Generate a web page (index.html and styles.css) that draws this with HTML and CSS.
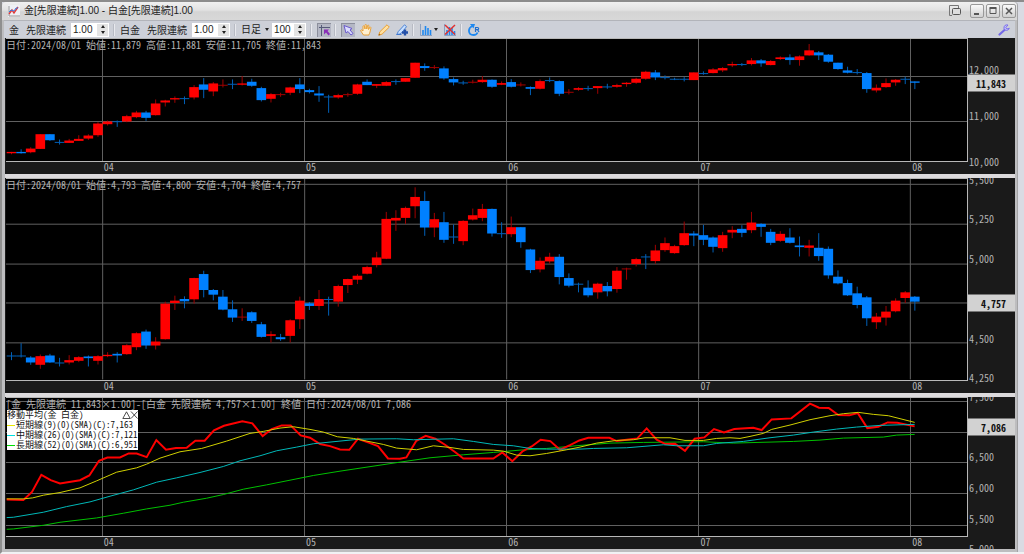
FILE: index.html
```html
<!DOCTYPE html>
<html lang="ja">
<head>
    <meta charset="UTF-8">
    <meta name="viewport" content="width=device-width, initial-scale=1.0">
    <title>金[先限連続]1.00 - 白金[先限連続]1.00</title>
    <link rel="stylesheet" href="styles.css">
</head>
<body>
    <div class="window">
        <header class="titlebar">
            <svg class="app-icon" viewBox="0 0 12 12">
                <rect width="12" height="12" fill="#eef0f4"/>
                <path d="M1 1v10h11" fill="none" stroke="#999"/>
                <path d="M1 9l3-4 2 3 4-6" fill="none" stroke="#e03a3a" stroke-width="1.4"/>
                <path d="M1 7l2-2 3 1 2-3 2 0" fill="none" stroke="#3a7be0"/>
            </svg>
            <h1>金[先限連続]1.00 - 白金[先限連続]1.00</h1>
            <div class="win-buttons">
                <button class="detach" aria-label="別ウィンドウ">
                    <svg viewBox="0 0 12 12"><path d="M3 10.500H.5V.5h9V3" fill="none" stroke="#777"/><rect x="3.500" y="3.500" width="8" height="6" rx="1" fill="#ddd" stroke="#555"/></svg>
                </button>
                <button aria-label="最小化"><svg viewBox="0 0 12 12"><path d="M3 9h5" stroke="#555" stroke-width="2"/></svg></button>
                <button aria-label="最大化"><svg viewBox="0 0 12 12"><path d="M3 3.500h6v5H3z" fill="none" stroke="#555"/><path d="M2.500 3h7" stroke="#555" stroke-width="2"/></svg></button>
                <button aria-label="閉じる"><svg viewBox="0 0 12 12"><path d="M3 3l6 6M9 3l-6 6" stroke="#555" stroke-width="1.500"/></svg></button>
            </div>
        </header>

        <div class="toolbar">
            <label for="ratio1"><span>金</span><span>先限連続</span></label>
            <div class="spin">
                <input type="text" id="ratio1" value="1.00">
                <div class="arrows"><button aria-label="増やす"></button><button class="down" aria-label="減らす"></button></div>
            </div>
            <span class="sep"></span>
            <label for="ratio2"><span>白金</span><span>先限連続</span></label>
            <div class="spin">
                <input type="text" id="ratio2" value="1.00">
                <div class="arrows"><button aria-label="増やす"></button><button class="down" aria-label="減らす"></button></div>
            </div>
            <span class="sep"></span>
            <div class="period">
                <select aria-label="足種"><option>日足</option></select>
            </div>
            <div class="spin count">
                <input type="text" aria-label="本数" value="100">
                <div class="arrows"><button aria-label="増やす"></button><button class="down" aria-label="減らす"></button></div>
            </div>
            <span class="sep"></span>
            <button class="tool on" aria-label="クロスカーソル">
                <svg viewBox="0 0 12 12"><path d="M3.500 1v11M1 3.500h11" stroke="#555b78"/><path d="M6 5.500h5L9.500 7l2.500 3-1.500 1.500L8 8.500 6 10.500z" fill="#8a2fb8"/></svg>
            </button>
            <span class="sep"></span>
            <button class="tool on" aria-label="選択">
                <svg viewBox="0 0 12 12"><path d="M2 1.500l8 3-2 1.500 3 3.500-2 1.500-3-3.500L4 9z" fill="#dcdcff" stroke="#6a5acd"/></svg>
            </button>
            <button class="tool" aria-label="移動">
                <svg viewBox="0 0 12 12"><path d="M3.500 11L.8 7c-.5-1 .6-1.500 1.300-.7L3 7V2.500c0-1 1.300-1 1.500 0L5 5V1.300C5 .2 6.500.2 6.600 1.300L6.800 5l.7-3.200c.2-1 1.500-.8 1.400.2L8.600 5.500l1-2c.5-.8 1.600-.3 1.300.6L10 8c-.3 1.500-1 2-1 3z" fill="#fff0d0" stroke="#e89a28" stroke-width=".9"/></svg>
            </button>
            <button class="tool" aria-label="描画">
                <svg viewBox="0 0 12 12"><path d="M.8 11.200l1-3.400L9 .8l2.300 2.300-7.200 7z" fill="#ffe0a0" stroke="#e89a28" stroke-width=".9"/><path d="M.5 11.500l.6-2 1.400 1.400z" fill="#a06010"/></svg>
            </button>
            <button class="tool" aria-label="描画オプション">
                <svg viewBox="0 0 12 12"><path d="M.8 10.500l1.500-3L8.500.8l2 1.800L6 8.500 3.500 10z" fill="#c8e0ff" stroke="#3f78d0" stroke-width=".9"/><path d="M.5 10.500h5" stroke="#3f78d0"/><path d="M9 5.500v6M6 8.500h6" stroke="#2450a8" stroke-width="2.400"/></svg>
            </button>
            <span class="sep"></span>
            <button class="tool wide" aria-label="指標">
                <svg viewBox="0 0 12 12"><path d="M.5 0v11.500H12" fill="none" stroke="#8aa0c0"/><path d="M3 11V6M5.500 11V2M8 11V4M10.500 11V6" stroke="#1e88f0" stroke-width="1.600"/></svg>
            </button>
            <button class="tool" aria-label="指標削除">
                <svg viewBox="0 0 12 12"><path d="M.5 0v11.500H12" fill="none" stroke="#8aa0c0"/><path d="M3 11V6M5.500 11V3M8 11V4M10.500 11V7" stroke="#1e88f0" stroke-width="1.600"/><path d="M1 1l10 9.500M11 1L1 10.500" stroke="#e03030" stroke-width="1.500"/></svg>
            </button>
            <span class="sep"></span>
            <button class="tool" aria-label="更新">
                <svg viewBox="0 0 12 12"><path d="M4.500 2C-.5 4-.2 11 5.500 11c2 0 3.500-1 4-2.500" fill="none" stroke="#1e88f0" stroke-width="1.800"/><path d="M2 0h5L5.500 4.500z" fill="#1e88f0"/><path d="M7.500 8V3.500h2c1.500 0 1.500 2.200 0 2.200h-2m2 0L11 8" fill="none" stroke="#1e6fd0" stroke-width="1.200"/></svg>
            </button>
            <button class="tool settings" aria-label="設定">
                <svg viewBox="0 0 12 12"><path d="M1.500 10.500l5-4.500" stroke="#7468e8" stroke-width="2.200" stroke-linecap="round"/><path d="M10 1C7.500.3 5.500 2 6 4.500 7 7 10.500 7 11.300 4.200L9 5 7.800 3.500z" fill="#c4c0ff" stroke="#7468e8" stroke-width=".9"/></svg>
            </button>
        </div>

        <main class="panels">
            <section class="panel" id="gold">
                <div class="plot">
                    <svg class="chart" preserveAspectRatio="none"></svg>
                    <p class="info">日付:2024/08/01 始値:11,879 高値:11,881 安値:11,705 終値:11,843</p>
                </div>
                <div class="months"></div>
                <div class="scale"></div>
            </section>
            <section class="panel" id="platinum">
                <div class="plot">
                    <svg class="chart" preserveAspectRatio="none"></svg>
                    <p class="info">日付:2024/08/01 始値:4,793 高値:4,800 安値:4,704 終値:4,757</p>
                </div>
                <div class="months"></div>
                <div class="scale"></div>
            </section>
            <section class="panel" id="spread">
                <div class="plot">
                    <svg class="chart" preserveAspectRatio="none"></svg>
                    <p class="info">[金 先限連続 11,843×1.00]－[白金 先限連続 4,757×1.00] 終値 日付:2024/08/01 7,086</p>
                    <div class="legend">
                        <div class="legend-head">移動平均(金 白金)
                            <svg viewBox="0 0 16 8"><path d="M.8 7.500L4.500.8l3.700 6.700zM9 .5l6.500 7M15.500.5L9 7.500" fill="none" stroke="#222" stroke-width=".8"/></svg>
                        </div>
                        <div class="short">短期線(9)(0)(SMA)(C):7,163</div>
                        <div class="mid">中期線(26)(0)(SMA)(C):7,121</div>
                        <div class="long">長期線(52)(0)(SMA)(C):6,951</div>
                    </div>
                </div>
                <div class="months"></div>
                <div class="scale"></div>
            </section>
        </main>
    </div>
    <script src="charts.js"></script>
</body>
</html>
```
FILE: styles.css
```css
* {
    margin: 0;
    padding: 0;
    box-sizing: border-box;
}

body {
    font-family: "Liberation Sans", "Noto Sans CJK JP", sans-serif;
    font-size: 10px;
    color: #222;
    height: 100vh;
    overflow: hidden;
    background: #d9dbe3;
    border-top: 2px solid #8c8c8c;
    border-left: 2px solid #8f8f8f;
    border-bottom: 2px solid #f2f2f4;
    padding-right: 6px;
}

button,
input,
select {
    font: inherit;
    color: inherit;
    border: none;
    background: none;
}

.window {
    display: flex;
    flex-direction: column;
    height: 100%;
    background: #bdbdbf;
    border-right: 1px solid #a4a4a6;
    border-radius: 4px 4px 0 0;
}

.titlebar {
    display: flex;
    align-items: center;
    height: 18px;
    padding: 0 1px 0 6px;
    gap: 4px;
    background: linear-gradient(#f0f0f0, #e2e2e2 45%, #d4d4d4 55%, #d8d8d8);
    border-radius: 4px 4px 0 0;
}

.app-icon {
    width: 12px;
    height: 12px;
}

h1 {
    flex: 1;
    font-size: 10px;
    font-weight: normal;
    line-height: 16px;
    white-space: nowrap;
}

.win-buttons {
    display: flex;
    gap: 2px;
}

.win-buttons button {
    width: 14px;
    height: 14px;
    border: 1px solid #999;
    border-radius: 2px;
    background: linear-gradient(#fafafa, #d0d0d0);
}

.win-buttons svg {
    display: block;
    width: 12px;
    height: 12px;
}

.win-buttons .detach {
    margin-right: 5px;
    border: none;
    background: none;
}

.toolbar {
    display: flex;
    align-items: center;
    height: 18px;
    margin: 0 2px;
    padding: 0 4px 0 5px;
    background: #cdd0d8;
    border-top: 1px solid #b2b4ba;
}

.toolbar label {
    display: flex;
    gap: 7px;
    margin-right: 5px;
    white-space: nowrap;
}

.spin {
    display: flex;
    width: 38px;
    height: 14px;
    padding: 1px;
    background: #fff;
}

.spin input {
    flex: 1;
    width: 0;
    padding-left: 1px;
    line-height: 12px;
}

.count {
    width: 34px;
}

.arrows {
    display: flex;
    flex-direction: column;
    justify-content: space-between;
    width: 11px;
}

.arrows button {
    display: flex;
    align-items: center;
    justify-content: center;
    height: 6px;
    background: #e4e4e4;
}

.arrows button::before,
.period::after,
.wide::after {
    content: "";
    border: 2px solid transparent;
    border-top: none;
    border-bottom: 3px solid #222;
}

.arrows .down::before,
.period::after,
.wide::after {
    border-bottom: none;
    border-top: 3px solid #222;
}

.sep {
    width: 1px;
    height: 12px;
    margin: 0 5px;
    background: #e8e9ee;
    box-shadow: -1px 0 #b8bbc4;
}

.period {
    display: flex;
    align-items: center;
    gap: 2px;
    margin-right: 3px;
}

.period select {
    appearance: none;
    width: 22px;
}

.tool {
    display: flex;
    align-items: center;
    justify-content: center;
    width: 14px;
    height: 14px;
    margin-right: 4px;
}

.tool svg {
    width: 12px;
    height: 12px;
    flex: none;
}

.tool.on {
    background: #b4b7c4;
    box-shadow: inset 1px 1px #8c8f9c;
}

.tool + .sep {
    margin-left: 0;
}

.wide {
    width: 20px;
    gap: 2px;
}

.settings {
    margin: 0 0 0 auto;
}

.panels {
    flex: 1;
    display: grid;
    grid-template-rows: 136fr 214fr 152fr;
    gap: 4px;
    margin: 0 2px 3px 3px;
    background: #dcdadc;
    min-height: 0;
}

.panel {
    display: grid;
    grid-template: "plot scale" minmax(0, 1fr) "months scale" 12px / minmax(0, 1fr) 47px;
    background: #1a1a1a;
    overflow: hidden;
    font-family: "Noto Sans Mono CJK JP", "Noto Sans CJK JP", monospace;
    font-feature-settings: "hwid";
    color: #b4b4b4;
}

.plot {
    grid-area: plot;
    position: relative;
    margin-left: 1px;
    background: #000;
    border: solid #b8b8b8;
    border-width: 1px 1px 1px 0;
}

.chart {
    position: absolute;
    width: 100%;
    height: 100%;
}

.grid {
    stroke: #606060;
    stroke-width: 1;
    vector-effect: non-scaling-stroke;
    shape-rendering: crispEdges;
}

.up {
    fill: #f00;
}

.up-wick {
    fill: #a00000;
}

.fall {
    fill: #0080ff;
}

.fall-wick {
    fill: #0060b8;
}

.line {
    fill: none;
    stroke-width: 1;
    vector-effect: non-scaling-stroke;
}

.price {
    stroke: #f00;
    stroke-width: 2;
}

.sma9 {
    stroke: #d0d000;
}

.sma26 {
    stroke: #00b8b8;
}

.sma52 {
    stroke: #00c000;
}

.info {
    position: absolute;
    top: 0;
    left: 0;
    line-height: 12px;
    white-space: nowrap;
}

.legend {
    position: absolute;
    top: 12px;
    left: 1px;
    width: 131px;
    padding-left: 9px;
    background: #fff;
    color: #111;
    font-size: 9px;
    line-height: 10px;
    white-space: nowrap;
}

.legend-head {
    display: flex;
    align-items: center;
    justify-content: space-between;
    margin-left: -9px;
}

.legend svg {
    width: 16px;
    height: 8px;
}

.short::before,
.mid::before,
.long::before {
    content: "";
    float: left;
    width: 8px;
    height: 1px;
    margin: 5px 0 0 -9px;
    background: #e8e800;
}

.mid::before {
    background: #00e0e0;
}

.long::before {
    background: #00e000;
}

.months {
    grid-area: months;
    position: relative;
    margin-left: 1px;
}

.months span {
    position: absolute;
    padding-left: 1px;
    line-height: 10px;
}

.scale {
    grid-area: scale;
    position: relative;
}

.scale span {
    position: absolute;
    left: 1px;
    line-height: 12px;
    transform: translateY(-50%);
}

.scale .last {
    left: 0;
    right: 0;
    padding-right: 9px;
    background: #d2d2d2;
    color: #111;
    font-weight: bold;
    line-height: 17px;
    text-align: right;
}
```
FILE: charts.js
```javascript
// each bar: direction (r = up, b = down), body top, body bottom, wick top, wick bottom
const goldBars = `r 341 345 341 348|b 341 345 333 346|r 331 342 327 345|r 288 332 288 332|b 288 306 288 308
b 311 314 304 319|r 307 314 302 314|r 302 308 291 308|r 292 301 288 305|r 256 291 252 296
r 250 258 247 262|b 249 251 247 266|r 234 250 230 252|r 223 237 218 240|b 223 239 218 248
r 196 231 184 232|r 187 193 185 205|r 180 184 175 194|b 180 182 175 198|r 147 178 141 184
b 139 155 120 180|r 136 160 132 174|r 140 143 124 148|b 137 139 124 153|r 136 140 114 142
b 131 143 122 146|b 150 186 146 190|r 168 182 165 193|r 168 171 164 176|r 148 164 146 171
b 139 153 120 165|b 156 162 152 166|b 166 172 144 191|b 175 177 170 224|r 171 178 167 182
r 168 171 164 176|r 139 167 137 170|b 131 141 124 141|r 138 143 138 150|r 132 143 129 144
b 129 131 124 140|r 120 131 120 131|r 74 119 74 119|b 84 90 76 98|r 87 90 81 93
b 91 121 85 125|b 123 133 118 142|b 133 135 128 140|r 131 133 125 136|r 125 132 114 134
b 125 146 124 149|r 135 140 130 141|b 132 146 123 148|r 139 142 133 145|b 147 152 145 171
r 129 152 124 154|b 126 128 118 132|b 129 167 127 174|r 161 164 153 169|r 150 155 147 158
b 150 152 143 158|r 144 150 144 167|b 145 147 137 152|r 141 146 137 149|r 134 138 132 146
r 122 134 119 137|r 101 122 98 125|b 103 118 96 126|b 117 120 112 124|b 122 125 119 126
b 122 125 117 130|r 103 126 103 126|b 105 107 100 110|r 94 105 90 106|r 90 97 87 102
r 78 82 71 87|b 78 80 75 84|r 67 78 60 82|b 67 76 63 86|r 69 81 66 82
r 58 63 55 66|b 58 66 49 80|r 55 66 52 83|r 37 52 18 53|b 43 52 39 66
b 50 71 48 74|b 74 93 74 95|b 97 104 86 106|b 102 104 93 109|b 105 153 102 164
r 149 157 139 163|r 135 147 121 149|r 125 133 123 143|b 122 124 116 138|b 130 134 130 153`;

const platinumBars = `b 546 548 536 560|b 546 549 509 552|b 552 567 548 574|r 548 574 543 586|b 546 567 541 568
b 567 569 553 579|r 560 567 545 573|r 551 562 548 566|b 549 554 546 579|r 548 562 545 573
r 544 548 536 551|b 541 546 536 567|r 515 542 512 544|r 479 521 476 530|b 474 516 468 526
r 504 516 491 528|r 390 497 384 498|r 381 388 366 409|b 376 383 368 404|r 313 377 312 390
b 301 349 291 371|b 349 363 346 380|b 369 408 349 410|b 407 432 380 445|r 429 432 404 442
b 416 442 413 448|b 452 490 445 492|r 482 487 473 507|b 491 497 481 502|r 440 487 437 507
r 381 437 369 466|b 389 397 385 409|r 376 397 349 409|b 376 378 369 426|r 337 384 333 399
r 316 334 315 358|r 306 318 301 331|r 280 300 276 302|r 251 274 234 281|r 135 255 114 256
r 132 140 109 171|r 102 132 98 150|r 69 97 40 133|b 81 161 52 186|r 136 161 117 190
b 145 198 114 207|b 188 191 152 210|r 141 202 139 214|r 124 137 104 140|r 105 132 90 142
b 105 179 104 188|b 178 181 145 192|r 160 181 128 190|b 160 205 160 222|b 227 289 225 298
r 261 287 251 296|r 249 263 237 270|b 249 310 241 332|b 313 336 299 341|b 330 333 327 356
b 342 365 320 371|r 330 356 327 375|b 337 353 325 368|r 291 346 280 357|r 284 287 282 318
r 256 271 252 278|b 248 250 241 286|r 230 262 213 270|r 208 229 191 234|r 217 238 213 240
r 178 214 143 216|b 179 185 172 217|b 184 198 153 214|b 191 219 188 236|r 184 223 174 234
r 168 176 157 193|b 165 177 154 190|r 146 169 114 178|b 150 159 148 189|b 174 207 165 214
r 180 201 172 204|b 191 207 163 209|b 215 220 188 248|r 215 222 198 248|b 222 247 178 261
b 225 305 218 315|b 309 329 290 332|b 328 365 318 367|b 359 394 339 404|b 371 434 367 457
r 429 446 418 466|r 414 432 397 456|r 381 413 374 416|r 356 373 352 388|b 369 384 367 411`;

const spreadLines = {
    sma52: '20,414 40,413 130,402 180,393 290,380 370,366 440,353 510,342 550,333 620,321 670,310 730,294 800,281 870,267 940,253 1020,240 1080,231 1140,222 1200,213 1290,200 1390,191 1480,184 1560,177 1640,172 1740,163 1830,156 1930,154 2110,152 2200,156 2310,153 2380,151 2460,147 2530,141 2650,138 2690,132 2744,130',
    price: '20,325 70,326 96,302 124,251 152,267 180,277 240,267 268,253 297,209 322,199 360,199 386,187 410,187 440,198 469,147 498,176 528,171 560,170 586,149 614,149 642,118 672,104 727,91 757,97 788,135 815,114 845,103 872,103 902,133 930,140 960,159 990,165 1020,175 1048,176 1074,143 1104,154 1134,165 1164,202 1200,203 1219,199 1249,149 1277,134 1306,143 1335,161 1364,182 1390,202 1480,202 1507,184 1537,210 1567,181 1595,166 1622,146 1651,150 1680,176 1710,162 1738,148 1765,140 1828,140 1850,150 1880,146 1912,142 1940,112 1970,146 1996,159 2025,158 2055,179 2084,143 2113,139 2142,114 2172,124 2203,114 2260,110 2285,117 2315,85 2374,82 2430,38 2457,50 2486,51 2515,72 2548,73 2573,66 2602,111 2635,107 2663,94 2692,95 2744,106',
    sma26: '20,379 40,378 130,363 200,346 270,332 330,315 400,296 470,273 530,260 600,244 670,226 720,209 780,194 830,179 890,168 940,158 1020,150 1080,144 1190,143 1240,146 1360,143 1420,151 1480,160 1540,164 1590,172 1640,174 1740,174 1780,172 1880,170 1990,161 2030,164 2110,164 2150,157 2230,151 2310,140 2380,132 2440,123 2510,114 2570,108 2640,103 2744,100',
    sma9: '20,323 70,323 98,320 130,312 180,304 240,290 290,269 350,243 410,230 440,219 480,201 540,182 605,172 680,150 750,127 790,121 840,111 880,107 930,115 970,123 1012,137 1060,142 1100,150 1150,160 1190,171 1250,176 1300,164 1350,169 1390,175 1480,177 1510,180 1550,192 1590,194 1640,187 1700,176 1740,168 1790,156 1850,148 1900,146 1935,140 2010,140 2055,148 2110,148 2150,142 2190,140 2220,142 2250,136 2290,127 2315,115 2370,102 2430,86 2490,74 2530,68 2575,64 2620,70 2665,74 2744,94'
};

const LEFT = 18;
const WIDTH = 2883;
const months = [['04', 308], ['05', 914], ['06', 1520], ['07', 2096], ['08', 2731]];

function gridLines(top, height, rows) {
    let out = '';
    rows.forEach(y => out += `<path class="grid" d="M${LEFT} ${y}H${LEFT + WIDTH}"/>`);
    months.forEach(m => out += `<path class="grid" d="M${m[1]} ${top}V${top + height}"/>`);
    return out;
}

function candles(text) {
    let out = '';
    text.split(/[|\n]/).forEach((row, i) => {
        const [dir, top, bottom, high, low] = row.split(' ');
        const x = 34 + i * 28.83;
        const cls = dir === 'r' ? 'up' : 'fall';
        const thin = bottom - top < 4 ? '-wick' : '';
        out += `<rect class="${cls}-wick" x="${x - 1}" y="${high}" width="3" height="${low - high}"/>`;
        out += `<rect class="${cls}${thin}" x="${x - 14}" y="${top}" width="28.83" height="${Math.max(3, bottom - top)}"/>`;
    });
    return out;
}

function drawPanel(id, opt) {
    const panel = document.getElementById(id);
    const svg = panel.querySelector('.chart');
    svg.setAttribute('viewBox', `${LEFT} ${opt.top} ${WIDTH} ${opt.height}`);
    svg.innerHTML = gridLines(opt.top, opt.height, opt.rows) + opt.content;

    panel.querySelector('.months').innerHTML = months.map(m =>
        `<span style="left:${(m[1] - LEFT) / WIDTH * 100}%">${m[0]}</span>`).join('');

    const place = y => (y - opt.panelTop) / opt.panelHeight * 100;
    panel.querySelector('.scale').innerHTML = opt.labels.map(l =>
        `<span style="top:${place(l[1])}%">${l[0]}</span>`).join('') +
        `<span class="last" style="top:${place(opt.last[1])}%">${opt.last[0]}</span>`;
}

drawPanel('gold', {
    top: 3, height: 366, panelTop: 0, panelHeight: 408,
    rows: [114, 250],
    content: candles(goldBars),
    labels: [['12,000', 97], ['11,000', 234], ['10,000', 370]],
    last: ['11,843', 134]
});

drawPanel('platinum', {
    top: 15, height: 603, panelTop: 12, panelHeight: 642,
    rows: [31, 151, 271, 388, 508],
    content: candles(platinumBars),
    labels: [['5,500', 16], ['5,250', 134], ['5,000', 255], ['4,500', 492], ['4,250', 609]],
    last: ['4,757', 386]
});

drawPanel('spread', {
    top: 21, height: 414, panelTop: 18, panelHeight: 456,
    rows: [30, 124, 214, 308, 402],
    content: Object.keys(spreadLines).map(k =>
        `<polyline class="line ${k}" points="${spreadLines[k]}"/>`).join(''),
    labels: [['7,500', 20], ['6,500', 198], ['6,000', 292], ['5,500', 385], ['5,000', 475]],
    last: ['7,086', 108]
});
```
